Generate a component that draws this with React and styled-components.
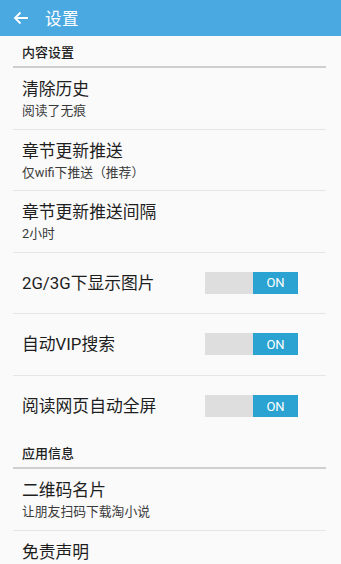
import React from "react";
import styled, { createGlobalStyle } from "styled-components";

const Global = createGlobalStyle`
  html, body { margin: 0; padding: 0; background: #fafafa; }
  body { font-family: Roboto, "Noto Sans CJK SC", "Noto Sans", sans-serif; color: #222; }
  * { box-sizing: border-box; }
`;

const Page = styled.div`
  width: 341px;
  height: 564px;
  overflow: hidden;
  background: #fafafa;
`;

const Header = styled.header`
  height: 36px;
  background: #4ba9e2;
  display: flex;
  align-items: center;
  padding-left: 13px;
  color: #fff;
`;

const Title = styled.h1`
  margin: 0 0 0 16px;
  font-size: 16.5px;
  font-weight: 400;
  letter-spacing: 0.5px;
`;

const List = styled.div`
  padding: 0 15px 0 13px;
`;

const SectionHeader = styled.div`
  height: 32px;
  padding: 9px 0 0 9px;
  font-size: 13px;
  line-height: 16px;
  font-weight: 500;
  color: #222;
  border-bottom: 2px solid #cfcfcf;
`;

const Row = styled.div`
  height: 61.5px;
  padding-left: 9px;
  display: flex;
  align-items: ${(p) => (p.$center ? "center" : "flex-start")};
  justify-content: space-between;
  border-bottom: ${(p) => (p.$last ? "none" : "1px solid #e6e6e6")};
`;

const Texts = styled.div`
  padding-top: 10px;
  display: flex;
  flex-direction: column;
`;

const RowTitle = styled.div`
  font-size: 16.8px;
  line-height: 22px;
  color: #1e1e1e;
`;

const RowSub = styled.div`
  margin-top: 2px;
  font-size: 12.8px;
  line-height: 18px;
  color: #3a3a3a;
`;

const Toggle = styled.div`
  width: 93px;
  height: 22px;
  margin-right: 28px;
  display: flex;
  background: #dedede;
`;

const ToggleOn = styled.div`
  margin-left: auto;
  width: 45px;
  height: 22px;
  background: #2aa3d2;
  color: #fff;
  font-size: 13px;
  display: flex;
  align-items: center;
  justify-content: center;
  font-family: Roboto, sans-serif;
`;

const Back = () => (
  <svg width="16" height="14" viewBox="0 0 16 14">
    <path d="M15 7H2M7.5 1.5L2 7l5.5 5.5" stroke="#fff" strokeWidth="1.8" fill="none" />
  </svg>
);

const InfoRow = ({ title, sub, last }) => (
  <Row $last={last}>
    <Texts>
      <RowTitle>{title}</RowTitle>
      {sub && <RowSub>{sub}</RowSub>}
    </Texts>
  </Row>
);

const SwitchRow = ({ title, last }) => (
  <Row $center $last={last}>
    <RowTitle>{title}</RowTitle>
    <Toggle>
      <ToggleOn>ON</ToggleOn>
    </Toggle>
  </Row>
);

export default function App() {
  return (
    <Page>
      <Global />
      <Header>
        <Back />
        <Title>设置</Title>
      </Header>
      <List>
        <SectionHeader>内容设置</SectionHeader>
        <InfoRow title="清除历史" sub="阅读了无痕" />
        <InfoRow title="章节更新推送" sub="仅wifi下推送（推荐）" />
        <InfoRow title="章节更新推送间隔" sub="2小时" />
        <SwitchRow title="2G/3G下显示图片" />
        <SwitchRow title="自动VIP搜索" />
        <SwitchRow title="阅读网页自动全屏" last />
        <SectionHeader>应用信息</SectionHeader>
        <InfoRow title="二维码名片" sub="让朋友扫码下载淘小说" />
        <InfoRow title="免责声明" />
      </List>
    </Page>
  );
}
